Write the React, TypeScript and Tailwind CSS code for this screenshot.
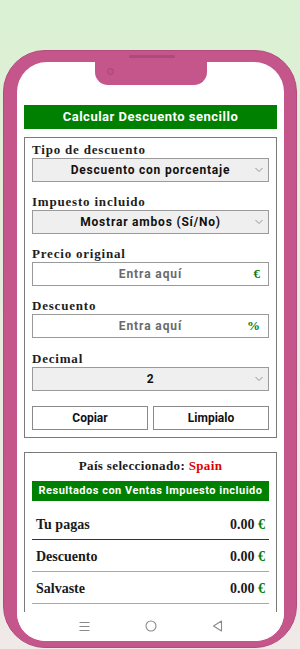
import React from "react";

const serif = { fontFamily: '"Liberation Serif", "Times New Roman", serif' };

function Chevron() {
  return (
    <svg className="absolute right-[5px] top-1/2 -translate-y-1/2" width="8" height="5" viewBox="0 0 8 5" fill="none">
      <path d="M0.5 0.5 L4 4 L7.5 0.5" stroke="#888" strokeWidth="0.9" />
    </svg>
  );
}

function Label({ children, mt }: { children: React.ReactNode; mt: string }) {
  return (
    <div className={`${mt} h-[16px] leading-[16px] text-[13px] font-bold tracking-[0.8px] text-[#1e1e1e]`} style={serif}>
      {children}
    </div>
  );
}

function Select({ text }: { text: string }) {
  return (
    <div className="relative h-[24px] border border-[#9a9a9a] bg-[#efefef] flex items-center justify-center text-[12px] font-bold tracking-[0.8px] text-[#111]">
      {text}
      <Chevron />
    </div>
  );
}

function Input({ unit }: { unit: string }) {
  return (
    <div className="relative h-[24px] border border-[#9a9a9a] bg-white flex items-center justify-center text-[12px] font-bold tracking-[0.9px] text-[#6a6a6a]">
      Entra aquí
      <span className="absolute right-[8px] top-1/2 -translate-y-1/2 text-[13px] font-bold text-[#0a7d0a] tracking-normal" style={serif}>
        {unit}
      </span>
    </div>
  );
}

function Row({ label, border }: { label: string; border: string }) {
  return (
    <div className={`h-[32px] flex items-center justify-between px-[4px] pt-[1px] border-b ${border}`} style={serif}>
      <span className="text-[14px] font-bold text-[#1a1a1a]">{label}</span>
      <span className="text-[14px] font-bold text-[#1a1a1a]">
        0.00 <span className="text-[#0a7d0a]">€</span>
      </span>
    </div>
  );
}

export default function App() {
  return (
    <div
      className="w-[300px] h-[649px] overflow-hidden bg-[linear-gradient(180deg,#d9f1d2_0%,#e3eed9_25%,#e9ece1_60%,#efe9e7_100%)] pt-[50px] pl-[3px]"
      style={{ fontFamily: 'Roboto, "Liberation Sans", Arial, sans-serif' }}
    >
      <div className="w-[294px] h-[598px] rounded-[42px] bg-[#c5568b] border border-[#b24c7e] pt-[11px] pl-[13px] pr-[12px] pb-[6px] flex relative">
        <div className="absolute left-[125px] top-[4px] w-[46px] h-[3px] rounded-full bg-[#ad4a7b]" />
        <div className="relative flex-1 bg-white rounded-t-[30px] rounded-b-[28px] overflow-hidden flex flex-col">
          <div className="relative flex-1 overflow-hidden px-[7px] pt-[43px]">
            <div className="absolute left-[78px] top-0 w-[112px] h-[23px] bg-[#c5568b] rounded-b-[13px]">
              <div className="absolute left-[12px] top-[6px] w-[7px] h-[7px] rounded-full border border-[#a9457a] bg-[#bf5287]" />
            </div>
            <div className="h-[24px] bg-[#008000] text-white text-[13px] font-bold tracking-[0.5px] flex items-center justify-center">
              Calcular Descuento sencillo
            </div>
            <div className="mt-[8px] border border-[#7a7a7a] px-[7px] pt-[4px] pb-[7px]">
              <Label mt="mt-0">Tipo de descuento</Label>
              <Select text="Descuento con porcentaje" />
              <Label mt="mt-[12px]">Impuesto incluido</Label>
              <Select text="Mostrar ambos (Sí/No)" />
              <Label mt="mt-[12px]">Precio original</Label>
              <Input unit="€" />
              <Label mt="mt-[12px]">Descuento</Label>
              <Input unit="%" />
              <Label mt="mt-[13px]">Decimal</Label>
              <Select text="2" />
              <div className="mt-[15px] flex gap-[5px]">
                <div className="flex-1 h-[24px] border border-[#8a8a8a] bg-white flex items-center justify-center text-[12px] font-bold text-[#111]">
                  Copiar
                </div>
                <div className="flex-1 h-[24px] border border-[#8a8a8a] bg-white flex items-center justify-center text-[12px] font-bold text-[#111]">
                  Limpialo
                </div>
              </div>
            </div>
            <div className="mt-[14px] border border-[#7a7a7a] px-[7px] pt-[5px] pb-[6px]">
              <div className="h-[16px] leading-[16px] text-center text-[13px] font-bold tracking-[0.35px] text-[#1a1a1a]" style={serif}>
                País seleccionado: <span className="text-[#e00000]">Spain</span>
              </div>
              <div className="mt-[7px] h-[20px] bg-[#008000] text-white text-[11px] font-bold tracking-[0.5px] flex items-center justify-center">
                Resultados con Ventas Impuesto incluido
              </div>
              <div className="mt-[7px]">
                <Row label="Tu pagas" border="border-[#333]" />
                <Row label="Descuento" border="border-[#a8a8a8]" />
                <Row label="Salvaste" border="border-[#a8a8a8]" />
                <div className="h-[20px]" />
              </div>
            </div>
          </div>
          <div className="h-[29px] shrink-0 bg-white flex items-center justify-center gap-[55px] pb-[1px]">
            <svg width="11" height="11" viewBox="0 0 11 11">
              <path d="M0.5 1.5 H10.5 M0.5 5.5 H10.5 M0.5 9.5 H10.5" stroke="#8a8a8a" strokeWidth="1" />
            </svg>
            <svg width="12" height="12" viewBox="0 0 12 12">
              <circle cx="6" cy="6" r="5" fill="none" stroke="#8a8a8a" strokeWidth="1.1" />
            </svg>
            <svg width="11" height="12" viewBox="0 0 11 12">
              <path d="M9.5 1 L1.5 6 L9.5 11 Z" fill="none" stroke="#8a8a8a" strokeWidth="1.1" strokeLinejoin="round" />
            </svg>
          </div>
        </div>
      </div>
    </div>
  );
}
